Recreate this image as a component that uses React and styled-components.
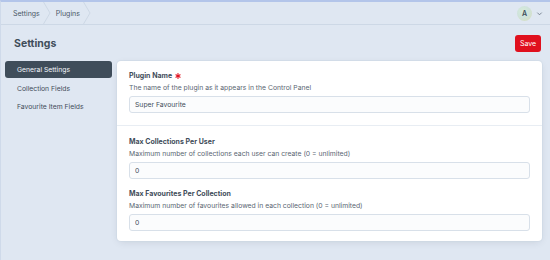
import React from "react";
import styled, { createGlobalStyle } from "styled-components";

const Global = createGlobalStyle`
  html, body { margin: 0; padding: 0; }
  body {
    background: #dfe7f2;
    font-family: Inter, "Noto Sans", "Liberation Sans", sans-serif;
    color: #3f4d5a;
    -webkit-font-smoothing: antialiased;
  }
`;

const Page = styled.div`
  width: 550px;
  height: 260px;
  box-sizing: border-box;
  border-top: 2px solid #b3c5ea;
  border-left: 1px solid #cfdaea;
  display: flex;
  flex-direction: column;
  overflow: hidden;
`;

const TopBar = styled.header`
  height: 22px;
  border-bottom: 1px solid #cdd8e6;
  display: flex;
  align-items: center;
  justify-content: space-between;
  padding: 0 7px 0 12px;
  flex-shrink: 0;
`;

const Crumbs = styled.nav`
  display: flex;
  align-items: center;
  height: 100%;
`;

const Crumb = styled.span`
  font-size: 7px;
  color: #4a5866;
  display: flex;
  align-items: center;
  height: 100%;
`;

const Sep = styled.svg`
  width: 8px;
  height: 22px;
  margin: 0 5px 0 3px;
  display: block;
`;

const User = styled.div`
  display: flex;
  align-items: center;
  gap: 4px;
`;

const Avatar = styled.div`
  width: 15px;
  height: 15px;
  border-radius: 50%;
  background: radial-gradient(circle at 40% 35%, #d7ecd9 0%, #cfe3dc 45%, #d8dcb8 100%);
  display: flex;
  align-items: center;
  justify-content: center;
  font-size: 7px;
  font-weight: 600;
  color: #3f4d5a;
`;

const TitleRow = styled.div`
  display: flex;
  align-items: center;
  justify-content: space-between;
  padding: 9px 9px 0 13px;
  height: 18px;
  flex-shrink: 0;
`;

const Title = styled.h1`
  margin: 0;
  font-size: 10.5px;
  font-weight: 700;
  color: #3f4d5a;
`;

const SaveButton = styled.button`
  width: 26px;
  height: 17px;
  border: none;
  border-radius: 3px;
  background: #e0101e;
  color: #fff;
  font-family: inherit;
  font-size: 7px;
  font-weight: 400;
  padding: 0;
  cursor: pointer;
`;

const Body = styled.div`
  display: flex;
  gap: 5px;
  padding: 9px 8px 0 4px;
`;

const Sidebar = styled.nav`
  width: 107px;
  display: flex;
  flex-direction: column;
  flex-shrink: 0;
`;

const NavItem = styled.a`
  height: ${p => (p.$active ? "17px" : "18px")};
  display: flex;
  align-items: center;
  padding-left: 12px;
  border-radius: 3px;
  font-size: 6.8px;
  color: ${p => (p.$active ? "#f3f6fa" : "#3f4d5a")};
  background: ${p => (p.$active ? "#3f4d5a" : "transparent")};
  margin-bottom: ${p => (p.$active ? "1px" : "0")};
  text-decoration: none;
`;

const Card = styled.section`
  flex: 1;
  background: #fff;
  border-radius: 4px;
  box-shadow: 0 0 0 1px rgba(205, 216, 228, 0.6), 0 2px 8px -2px rgba(31, 41, 51, 0.15);
  height: 180px;
  box-sizing: border-box;
`;

const Section = styled.div`
  padding: ${p => p.$pad};
  border-bottom: ${p => (p.$divider ? "1px solid #e8edf3" : "none")};
  display: flex;
  flex-direction: column;
  gap: ${p => p.$gap || "0"};
`;

const Field = styled.div`
  display: flex;
  flex-direction: column;
`;

const Label = styled.label`
  font-size: 7px;
  font-weight: 700;
  color: #3f4d5a;
  line-height: 12px;
  display: flex;
  align-items: center;
  gap: 3px;
`;

const Required = styled.svg`
  width: 6px;
  height: 6px;
  display: block;
`;

const Desc = styled.div`
  font-size: 6.8px;
  color: #5a6672;
  line-height: 12px;
  margin-bottom: 2px;
`;

const Input = styled.input`
  box-sizing: border-box;
  width: 100%;
  height: 17px;
  border: 1px solid #d8e0e9;
  border-radius: 3px;
  background: #fbfcfd;
  font-family: inherit;
  font-size: 6.8px;
  color: #3f4d5a;
  padding: 0 5px;
  outline: none;
`;

const Chevron = () => (
  <Sep viewBox="0 0 8 22" aria-hidden="true">
    <path d="M0.5 0 L7 11 L0.5 22" fill="none" stroke="#c9d4e2" strokeWidth="0.8" />
  </Sep>
);

const Asterisk = () => (
  <Required viewBox="0 0 10 10" aria-hidden="true">
    <g stroke="#e0101e" strokeWidth="1.8" strokeLinecap="round">
      <path d="M5 1 V9" />
      <path d="M1.5 3 L8.5 7" />
      <path d="M1.5 7 L8.5 3" />
    </g>
  </Required>
);

export default function App() {
  return (
    <>
      <Global />
      <Page>
        <TopBar>
          <Crumbs>
            <Crumb>Settings</Crumb>
            <Chevron />
            <Crumb>Plugins</Crumb>
            <Chevron />
          </Crumbs>
          <User>
            <Avatar>A</Avatar>
            <svg width="7" height="7" viewBox="0 0 8 8" aria-hidden="true">
              <path d="M1.5 3 L4 5.5 L6.5 3" fill="none" stroke="#6b7785" strokeWidth="1" />
            </svg>
          </User>
        </TopBar>
        <TitleRow>
          <Title>Settings</Title>
          <SaveButton>Save</SaveButton>
        </TitleRow>
        <Body>
          <Sidebar>
            <NavItem $active>General Settings</NavItem>
            <NavItem>Collection Fields</NavItem>
            <NavItem>Favourite Item Fields</NavItem>
          </Sidebar>
          <Card>
            <Section $pad="9px 12px 12px 12px" $divider>
              <Field>
                <Label>
                  Plugin Name <Asterisk />
                </Label>
                <Desc>The name of the plugin as it appears in the Control Panel</Desc>
                <Input defaultValue="Super Favourite" />
              </Field>
            </Section>
            <Section $pad="10px 12px 12px 12px" $gap="9px">
              <Field>
                <Label>Max Collections Per User</Label>
                <Desc>Maximum number of collections each user can create (0 = unlimited)</Desc>
                <Input defaultValue="0" />
              </Field>
              <Field>
                <Label>Max Favourites Per Collection</Label>
                <Desc>Maximum number of favourites allowed in each collection (0 = unlimited)</Desc>
                <Input defaultValue="0" />
              </Field>
            </Section>
          </Card>
        </Body>
      </Page>
    </>
  );
}
